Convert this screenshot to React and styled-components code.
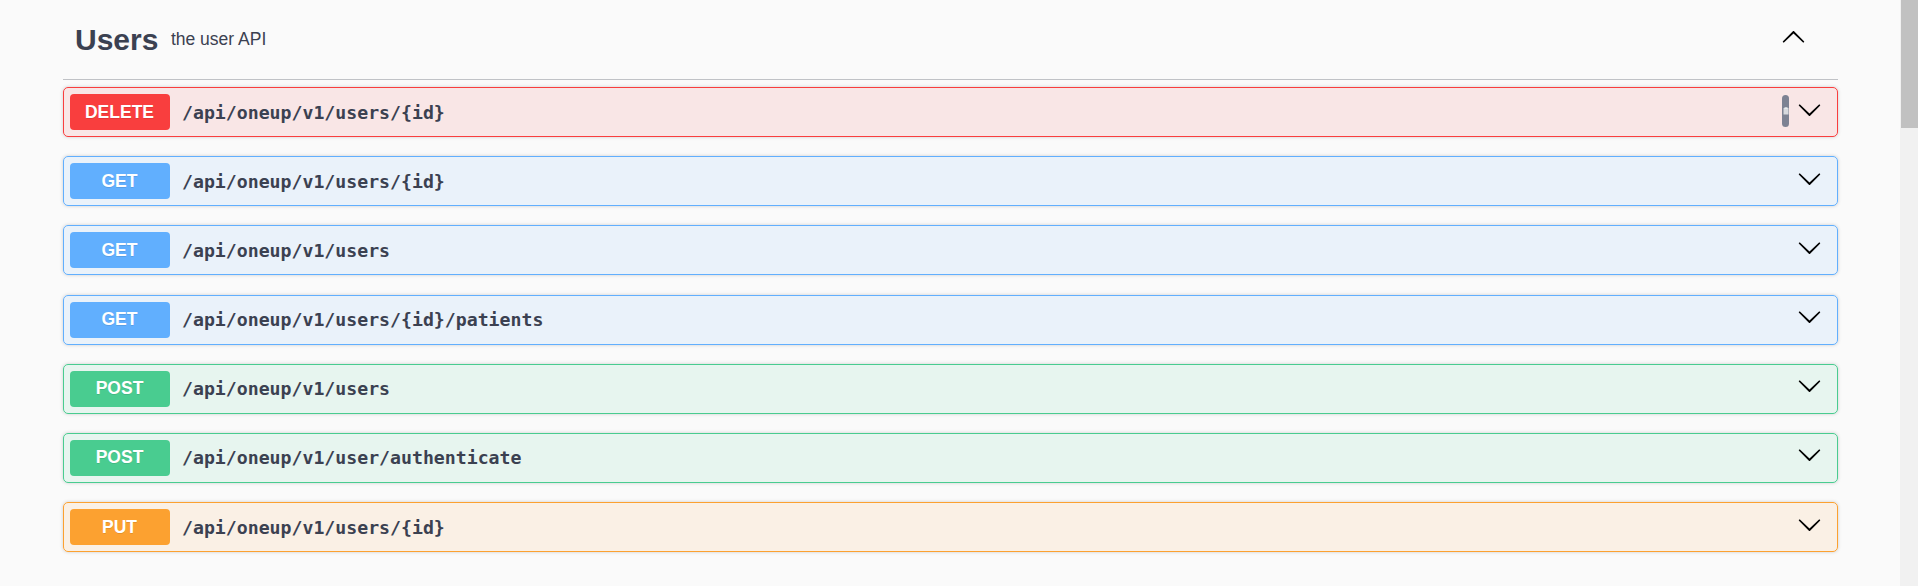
import React from "react";
import styled, { createGlobalStyle } from "styled-components";

const GlobalStyle = createGlobalStyle`
  html, body {
    margin: 0;
    padding: 0;
    background: #fafafa;
  }
  body {
    font-family: "Liberation Sans", Arial, sans-serif;
    color: #3b4151;
  }
`;

const METHOD_COLORS = {
  DELETE: "249, 62, 62",
  GET: "97, 175, 254",
  POST: "73, 204, 144",
  PUT: "252, 161, 48",
};

const operations = [
  { method: "DELETE", path: "/api/oneup/v1/users/{id}", copy: true },
  { method: "GET", path: "/api/oneup/v1/users/{id}" },
  { method: "GET", path: "/api/oneup/v1/users" },
  { method: "GET", path: "/api/oneup/v1/users/{id}/patients" },
  { method: "POST", path: "/api/oneup/v1/users" },
  { method: "POST", path: "/api/oneup/v1/user/authenticate" },
  { method: "PUT", path: "/api/oneup/v1/users/{id}" },
];

const Page = styled.div`
  padding-right: 18px;
  min-height: 586px;
  box-sizing: border-box;
`;

const Container = styled.div`
  max-width: 1825px;
  margin: 0 auto;
  padding: 0 25px;
  box-sizing: border-box;
`;

const TagHeader = styled.h3`
  display: flex;
  align-items: center;
  height: 80px;
  box-sizing: border-box;
  margin: 0 0 7px;
  padding: 0 32px 0 12.5px;
  border-bottom: 1px solid rgba(59, 65, 81, 0.3);
  font-weight: 700;
`;

const TagName = styled.span`
  font-family: "Liberation Sans", Arial, sans-serif;
  font-size: 30px;
  font-weight: 700;
  color: #3b4151;
`;

const TagDescription = styled.small`
  flex: 1;
  padding: 0 12.5px;
  font-family: "Liberation Sans", Arial, sans-serif;
  font-size: 17.5px;
  font-weight: 400;
  color: #3b4151;
`;

const ArrowSvg = styled.svg`
  width: 25px;
  height: 25px;
  flex-shrink: 0;
  fill: #000;
  transform: ${(p) => (p.$up ? "rotate(180deg)" : "none")};
  margin-bottom: ${(p) => (p.$up ? "5px" : "6px")};
  margin-right: ${(p) => (p.$up ? "0" : "15px")};
`;

const Arrow = ({ up }) => (
  <ArrowSvg $up={up} viewBox="0 0 20 20" aria-hidden="true">
    <path d="M17.418 6.109c.272-.268.709-.268.979 0s.271.701 0 .969l-7.908 7.83c-.27.268-.707.268-.979 0l-7.908-7.83c-.27-.268-.27-.701 0-.969.271-.268.709-.268.979 0L10 13.25l7.418-7.141z" />
  </ArrowSvg>
);

const OpBlock = styled.div`
  display: flex;
  align-items: center;
  height: 50px;
  box-sizing: border-box;
  margin-bottom: 19.2px;
  padding: 0 0 0 6px;
  border: 1px solid rgb(${(p) => p.$rgb});
  border-radius: 5px;
  background: rgba(${(p) => p.$rgb}, 0.1);
  box-shadow: 0 0 3.75px rgba(0, 0, 0, 0.19);
`;

const MethodBadge = styled.span`
  display: flex;
  align-items: center;
  justify-content: center;
  width: 100px;
  height: 36px;
  flex-shrink: 0;
  border-radius: 4px;
  background: rgb(${(p) => p.$rgb});
  color: #fff;
  font-family: "Liberation Sans", Arial, sans-serif;
  font-size: 17.5px;
  font-weight: 700;
  text-shadow: 0 1px 0 rgba(0, 0, 0, 0.1);
`;

const PathText = styled.span`
  flex: 1;
  padding: 0 12.5px;
  font-family: "DejaVu Sans Mono", "Liberation Mono", monospace;
  font-size: 18.2px;
  font-weight: 700;
  color: #3b4151;
`;

const CopyButton = styled.span`
  display: flex;
  align-items: center;
  justify-content: flex-start;
  width: 7px;
  height: 32px;
  margin-right: 8px;
  margin-bottom: 2px;
  border-radius: 4px;
  background: #7d8293;
  overflow: hidden;
  flex-shrink: 0;

  svg {
    width: 6px;
    height: 8px;
    margin-left: 1px;
    flex-shrink: 0;
  }
`;

const ScrollTrack = styled.div`
  position: fixed;
  top: 0;
  right: 0;
  width: 18px;
  height: 100vh;
  background: #f1f1f1;
`;

const ScrollThumb = styled.div`
  margin-left: 1px;
  height: 128px;
  background: #c1c1c1;
`;

const Operation = ({ method, path, copy }) => {
  const rgb = METHOD_COLORS[method];
  return (
    <OpBlock $rgb={rgb}>
      <MethodBadge $rgb={rgb}>{method}</MethodBadge>
      <PathText>{path}</PathText>
      {copy && (
        <CopyButton>
          <svg viewBox="0 0 6 8" aria-hidden="true">
            <rect x="0.5" y="1" width="5" height="6.5" fill="#d7d9de" />
            <rect x="1.5" y="0.3" width="3" height="1.5" fill="#eef0f2" />
          </svg>
        </CopyButton>
      )}
      <Arrow />
    </OpBlock>
  );
};

const App = () => {
  return (
    <>
      <GlobalStyle />
      <Page>
        <Container>
          <TagHeader>
            <TagName>Users</TagName>
            <TagDescription>the user API</TagDescription>
            <Arrow up />
          </TagHeader>
          {operations.map((op, i) => (
            <Operation key={i} {...op} />
          ))}
        </Container>
      </Page>
      <ScrollTrack>
        <ScrollThumb />
      </ScrollTrack>
    </>
  );
};

export default App;
